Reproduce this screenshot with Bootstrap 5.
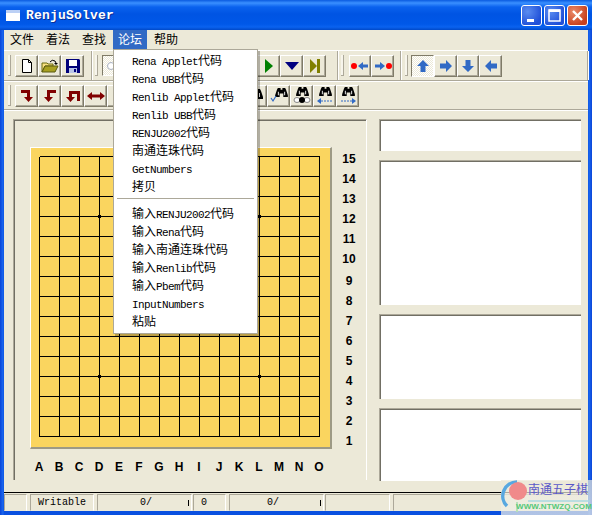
<!DOCTYPE html>
<html lang="zh">
<head>
<meta charset="utf-8">
<title>RenjuSolver</title>
<link rel="stylesheet" href="https://cdn.jsdelivr.net/npm/bootstrap@5.3.0/dist/css/bootstrap.min.css">
<style>
html,body{margin:0;padding:0;width:592px;height:515px;overflow:hidden;background:#0a4de0}
body{font-family:"Noto Sans CJK SC","Liberation Sans",sans-serif;font-size:12px;color:#000;line-height:1}
.xp-win{position:relative;width:592px;height:515px;background:linear-gradient(90deg,#0a45d8 0,#1a68f0 3px,#0a50e0 4px,#0a50e0 588px,#1a68f0 589px,#0a45d8 592px)}
.xp-title{height:30px;background:linear-gradient(180deg,#0a5be0 0,#3a90ff 3px,#0a62ee 7px,#0054e3 14px,#0058e8 24px,#0a62f0 27px,#0049c8 30px);color:#fff;padding-left:6px}
.xp-title-txt{font:bold 13px "Liberation Mono",monospace;letter-spacing:.2px;margin-left:6px;text-shadow:1px 1px #0a2f96}
.xp-appicon{width:14px;height:11px;background:#fff;border-top:3px solid #bcd0f5}
.xp-cap{width:21px;height:21px;border:1px solid #fff;border-radius:3px;background:radial-gradient(circle at 30% 30%,#5a8cf0,#2050d8 75%);margin-left:2px}
.xp-cap-close{background:radial-gradient(circle at 30% 30%,#ea8a6a,#c8401c 75%)}
.xp-client{margin:0 4px;height:481px;background:#ece9d8}
.xp-menubar{height:20px;padding-left:1px}
.xp-mi{width:34px;height:19px;margin-right:2px;color:#000;text-align:center;line-height:18px;font-size:12px}
.xp-mi-on{background:#316ac5;color:#fff}
.xp-row1{height:31px;border-top:1px solid #fff;border-bottom:1px solid #aca899}
.xp-row2{height:29px;border-top:1px solid #fff;border-bottom:1px solid #aca899;box-shadow:0 1px #fff;padding-left:4px}
.xp-band{height:29px;border-right:1px solid #aca899;box-shadow:1px 0 #fff}
.xp-grip{width:3px;height:21px;background:#f7f5ec;border-right:1px solid #aca899;border-bottom:1px solid #aca899;flex:none}
.xp-b1{width:88px;padding-left:4px}.xp-b1 .xp-grip{margin-right:4px}
.xp-b2{width:245px;margin-left:1px;padding-left:2px}.xp-b2 .xp-grip{margin-right:4px}
.xp-b3{width:62px;margin-left:1px;padding-left:2px}.xp-b3 .xp-grip{margin-right:5px}
.xp-b4{width:186px;margin-left:1px;padding-left:3px;border-right:1px solid #aca899}.xp-b4 .xp-grip{margin-right:3px}
.xp-row2 .xp-grip{margin-right:4px}
.btn.xp-tb{width:23px;height:22px;padding:0;border-radius:0;border:1px solid;border-color:#fff #7f7b68 #7f7b68 #fff;box-shadow:inset -1px -1px #aca899;background:#ece9d8;display:flex;align-items:center;justify-content:center;flex:none}
.btn.xp-tb-on{border-color:#7f7b68 #fff #fff #7f7b68;box-shadow:none;background-color:#f4f2e8;background-image:repeating-conic-gradient(#fff 0 25%,#ece9d8 0 50%);background-size:2px 2px}
.btn.xp-tb-n{width:22px}
.xp-combo{width:155px;height:21px;border:1px solid;border-color:#7f7b68 #fff #fff #7f7b68;background:repeating-conic-gradient(#fff 0 25%,#ece9d8 0 50%) 0 0/2px 2px;flex:none}
.xp-combo svg{display:block}
.xp-main{height:382px;padding:9px 7px 0 9px;gap:12px}
.xp-left{width:354px;height:361px;border:1px solid;border-color:#aca899 #fff transparent #aca899;border-bottom:0;box-shadow:inset 1px 1px #716f64;padding:27px 0 0 16px}
.xp-board{width:302px;height:302px;border:1px solid;border-color:#fff #9d9a85 #9d9a85 #fff;border-width:1px 2px 2px 1px;background:#fad55f;flex:none}
.xp-board svg{display:block}
.xp-nums{width:35px;padding-top:2px}
.xp-num,.xp-let{font:bold 12px "Liberation Sans",sans-serif;text-align:center;line-height:20px;height:20px}
.xp-num-gap{margin-top:2px}
.xp-lets{margin:6px 0 0 -1px}
.xp-let{width:20px}
.xp-right{width:202px;gap:9px}
.xp-box{background:#fff;border:1px solid;border-width:1px 0 0 1px;border-color:#aca899 transparent transparent #aca899;box-shadow:inset 1px 1px #716f64}
.xp-h1{height:32px}.xp-h2{height:145px}.xp-h3{height:85px}.xp-h4{height:73px}
.xp-status{height:19px;border-top:1px solid #000;padding:1px 0 0 0;gap:3px}
.xp-cell{height:17px;border:1px solid;border-color:#aca899 #fff #ece9d8 #aca899;font:10px/16px "Liberation Mono",monospace;text-align:center;flex:none}
.xp-cell-l{position:relative}
.xp-c0{width:23px}.xp-c1{width:64px}.xp-c2{width:95px;padding-left:3px}.xp-c3{width:33px;text-align:left;padding-left:7px;margin-left:-2px}.xp-c4{width:95px;padding-right:7px}.xp-c5{width:65px;margin-left:-2px}.xp-c6{width:195px}
.xp-tick{width:1px;height:6px;background:#000;position:absolute;right:2px;top:5px}
.dropdown-menu.xp-menu{position:absolute;left:113px;top:49px;width:145px;height:285px;margin:0;padding:1px 3px;border:1px solid #aca899;border-radius:0;background:#fff;box-shadow:2px 2px 0 rgba(0,0,0,.25);display:block;min-width:0}
.dropdown-item.xp-it{height:18px;line-height:18px;padding:0 0 0 15px;font-size:12px;color:#000;white-space:nowrap}
.xp-lat{font:11px "Liberation Mono",monospace;letter-spacing:-.6px}
.dropdown-divider.xp-sep{margin:3px 0 5px;border-top:1px solid #aca899;opacity:1}
.xp-wm{position:absolute;left:501px;top:480px;width:91px;height:35px;background:linear-gradient(180deg,rgba(236,233,216,.7),rgba(240,240,232,.72))}
.xp-wm svg{position:absolute;left:0;top:0}
.xp-wm-cn{position:absolute;left:27px;top:3px;font-size:12px;color:#5a58c8;white-space:nowrap}
.xp-wm-en{position:absolute;left:15px;top:22px;font:bold 8px "Liberation Sans",sans-serif;letter-spacing:.1px;color:#55c878;white-space:nowrap}
</style>
</head>
<body>
<svg width="0" height="0" class="position-absolute">
 <defs>
  <symbol id="i-bino" viewBox="0 0 14 11"><path d="M3 0h3v2h2V0h3l1 2 2 6v2H9V6H5v4H0V8l2-6z" fill="#000"/><path d="M3 4h1v4H3zM10 4h1v4h-1z" fill="#fff"/></symbol>
 </defs>
</svg>
<div class="xp-win">
 <div class="xp-title d-flex align-items-center">
  <div class="xp-appicon"></div>
  <div class="xp-title-txt flex-grow-1">RenjuSolver</div>
  <div class="xp-cap d-flex align-items-end justify-content-start"><svg width="19" height="19" viewBox="0 0 19 19"><rect x="5" y="13" width="7" height="3" fill="#fff"/></svg></div>
  <div class="xp-cap"><svg width="19" height="19" viewBox="0 0 19 19" class="d-block"><rect x="4" y="4" width="11" height="11" fill="none" stroke="#fff" stroke-width="1.5"/><rect x="4" y="3.5" width="11" height="2.5" fill="#fff"/></svg></div>
  <div class="xp-cap xp-cap-close me-1"><svg width="19" height="19" viewBox="0 0 19 19" class="d-block"><path d="M5 5l9 9M14 5l-9 9" stroke="#fff" stroke-width="2.4"/></svg></div>
 </div>
 <div class="xp-client d-flex flex-column">
  <nav class="xp-menubar d-flex">
   <div class="xp-mi">文件</div><div class="xp-mi">着法</div><div class="xp-mi">查找</div><div class="xp-mi xp-mi-on">论坛</div><div class="xp-mi">帮助</div>
  </nav>
  <div class="xp-row1 d-flex">
   <div class="xp-band xp-b1 d-flex align-items-center">
    <div class="xp-grip"></div>
    <button class="btn xp-tb"><svg width="16" height="16" viewBox="0 0 16 16"><path d="M3.5 1.5h6l3 3v10h-9z" fill="#fff" stroke="#000"/><path d="M9.5 1.5v3h3" fill="none" stroke="#000"/></svg></button>
    <button class="btn xp-tb"><svg width="18" height="16" viewBox="0 0 18 16"><path d="M1 5h5l1 1h5v2H4l-3 6z" fill="#f8e080" stroke="#6a6a10"/><path d="M4 8h13l-3 6H1z" fill="#a8a020" stroke="#5a5a10"/><path d="M9 4q2-3 5-1l1 2" fill="none" stroke="#000"/><path d="M13 5h4l-2 2z" fill="#000"/></svg></button>
    <button class="btn xp-tb"><svg width="16" height="16" viewBox="0 0 16 16"><path d="M1 1h13l1 1v13H1z" fill="#00007a"/><rect x="4" y="2" width="8" height="6" fill="#fff"/><rect x="4" y="10" width="8" height="5" fill="#b8c4e8"/><rect x="9" y="11" width="2" height="3" fill="#00007a"/></svg></button>
   </div>
   <div class="xp-band xp-b2 d-flex align-items-center">
    <div class="xp-grip"></div>
    <div class="xp-combo"><svg width="20" height="19" viewBox="0 0 20 19"><circle cx="8" cy="10" r="3.500" fill="#fff" stroke="#a8b0c0"/></svg></div>
    <button class="btn xp-tb"><svg width="16" height="16" viewBox="0 0 16 16"><path d="M4 1l8 7-8 7z" fill="#008000"/></svg></button>
    <button class="btn xp-tb"><svg width="16" height="16" viewBox="0 0 16 16"><path d="M1 4h14l-7 8z" fill="#000080"/></svg></button>
    <button class="btn xp-tb"><svg width="16" height="16" viewBox="0 0 16 16"><path d="M3 1l7 7-7 7z" fill="#808000"/><rect x="10" y="1" width="3" height="14" fill="#808000"/></svg></button>
   </div>
   <div class="xp-band xp-b3 d-flex align-items-center">
    <div class="xp-grip"></div>
    <button class="btn xp-tb xp-tb-n"><svg width="20" height="12" viewBox="0 0 20 12"><circle cx="4" cy="6" r="3" fill="#f00"/><path d="M8 6l5-4v2.500h5v3h-5V10z" fill="#316ac5"/></svg></button>
    <button class="btn xp-tb"><svg width="20" height="12" viewBox="0 0 20 12"><path d="M2 4.500h5V2l5 4-5 4V7.500H2z" fill="#316ac5"/><circle cx="16" cy="6" r="3" fill="#f00"/></svg></button>
   </div>
   <div class="xp-band xp-b4 d-flex align-items-center">
    <div class="xp-grip"></div>
    <button class="btn xp-tb xp-tb-on"><svg width="14" height="14" viewBox="0 0 14 14"><path d="M7 1l6 6H9.500v6h-5V7H1z" fill="#316ac5"/></svg></button>
    <button class="btn xp-tb"><svg width="14" height="14" viewBox="0 0 14 14"><path d="M1 4.500h6V1l6 6-6 6V9.500H1z" fill="#316ac5"/></svg></button>
    <button class="btn xp-tb xp-tb-n"><svg width="14" height="14" viewBox="0 0 14 14"><path d="M7 13l6-6H9.500V1h-5v6H1z" fill="#316ac5"/></svg></button>
    <button class="btn xp-tb"><svg width="14" height="14" viewBox="0 0 14 14"><path d="M13 4.500H7V1L1 7l6 6V9.500h6z" fill="#316ac5"/></svg></button>
   </div>
  </div>
  <div class="xp-row2 d-flex align-items-center">
   <div class="xp-grip"></div>
   <button class="btn xp-tb"><svg width="14" height="14" viewBox="0 0 14 14"><path d="M1 1h9v7h3l-4.500 5L4 8h3V4H1z" fill="#800000"/></svg></button>
   <button class="btn xp-tb"><svg width="14" height="14" viewBox="0 0 14 14"><path d="M13 1H4v7H1l4.500 5L10 8H7V4h6z" fill="#800000"/></svg></button>
   <button class="btn xp-tb"><svg width="16" height="14" viewBox="0 0 16 14"><path d="M4 2h11v10h-3V5H7v3h3l-4.500 5L1 8h3z" fill="#800000"/></svg></button>
   <button class="btn xp-tb"><svg width="18" height="10" viewBox="0 0 18 10"><path d="M0 5l5-4v2.500h8V1l5 4-5 4V6.500H5V9z" fill="#800000"/></svg></button>
   <button class="btn xp-tb"></button><button class="btn xp-tb"></button><button class="btn xp-tb"></button><button class="btn xp-tb"></button><button class="btn xp-tb"></button>
   <button class="btn xp-tb"></button>
   <button class="btn xp-tb xp-tb-n"><svg width="16" height="16" viewBox="0 0 16 16"><use href="#i-bino" x="1" y="1" width="14" height="11"/></svg></button>
   <button class="btn xp-tb"><svg width="18" height="18" viewBox="0 0 18 18"><use href="#i-bino" x="5" y="1" width="13" height="10"/><path d="M1 11l2 3 3-5" fill="none" stroke="#316ac5" stroke-width="1.2"/></svg></button>
   <button class="btn xp-tb"><svg width="20" height="18" viewBox="0 0 20 18"><use href="#i-bino" x="4" y="0" width="13" height="10"/><ellipse cx="5" cy="13" rx="3" ry="2.500" fill="#fff" stroke="#888"/><ellipse cx="15" cy="13" rx="3" ry="2.500" fill="#fff" stroke="#888"/><circle cx="10" cy="13" r="3" fill="#000"/></svg></button>
   <button class="btn xp-tb"><svg width="18" height="18" viewBox="0 0 18 18"><use href="#i-bino" x="3" y="0" width="13" height="10"/><path d="M1 14l4-3v6z" fill="#316ac5"/><path d="M5 14h11" stroke="#316ac5" stroke-dasharray="2 1" stroke-width="1.2"/></svg></button>
   <button class="btn xp-tb"><svg width="18" height="18" viewBox="0 0 18 18"><use href="#i-bino" x="3" y="0" width="13" height="10"/><path d="M17 14l-4-3v6z" fill="#316ac5"/><path d="M2 14h11" stroke="#316ac5" stroke-dasharray="2 1" stroke-width="1.2"/></svg></button>
  </div>
  <div class="xp-main d-flex">
   <div class="xp-left d-flex flex-column">
    <div class="d-flex">
     <div class="xp-board">
      <svg width="299" height="299" viewBox="0 0 299 299" shape-rendering="crispEdges">
       <g stroke="#000" stroke-width="1">
        <path fill="none" d="M8.500 8.500h280M8.500 28.500h280M8.500 48.500h280M8.500 68.500h280M8.500 88.500h280M8.500 108.500h280M8.500 128.500h280M8.500 148.500h280M8.500 168.500h280M8.500 188.500h280M8.500 208.500h280M8.500 228.500h280M8.500 248.500h280M8.500 268.500h280M8.500 288.500h280"/>
        <path fill="none" d="M8.500 8.500v280M28.500 8.500v280M48.500 8.500v280M68.500 8.500v280M88.500 8.500v280M108.500 8.500v280M128.500 8.500v280M148.500 8.500v280M168.500 8.500v280M188.500 8.500v280M208.500 8.500v280M228.500 8.500v280M248.500 8.500v280M268.500 8.500v280M288.500 8.500v280"/>
       </g>
       <g fill="#000"><rect x="67" y="67" width="3" height="3"/><rect x="227" y="67" width="3" height="3"/><rect x="147" y="147" width="3" height="3"/><rect x="67" y="227" width="3" height="3"/><rect x="227" y="227" width="3" height="3"/></g>
      </svg>
     </div>
     <div class="xp-nums">
      <div class="xp-num">15</div><div class="xp-num">14</div><div class="xp-num">13</div><div class="xp-num">12</div><div class="xp-num">11</div><div class="xp-num">10</div>
      <div class="xp-num xp-num-gap">9</div><div class="xp-num">8</div><div class="xp-num">7</div><div class="xp-num">6</div><div class="xp-num">5</div><div class="xp-num">4</div><div class="xp-num">3</div><div class="xp-num">2</div><div class="xp-num">1</div>
     </div>
    </div>
    <div class="xp-lets d-flex">
     <div class="xp-let">A</div><div class="xp-let">B</div><div class="xp-let">C</div><div class="xp-let">D</div><div class="xp-let">E</div><div class="xp-let">F</div><div class="xp-let">G</div><div class="xp-let">H</div><div class="xp-let">I</div><div class="xp-let">J</div><div class="xp-let">K</div><div class="xp-let">L</div><div class="xp-let">M</div><div class="xp-let">N</div><div class="xp-let">O</div>
    </div>
   </div>
   <div class="xp-right d-flex flex-column">
    <div class="xp-box xp-h1"></div>
    <div class="xp-box xp-h2"></div>
    <div class="xp-box xp-h3"></div>
    <div class="xp-box xp-h4"></div>
   </div>
  </div>
  <div class="xp-status d-flex">
   <div class="xp-cell xp-c0"></div>
   <div class="xp-cell xp-c1">Writable</div>
   <div class="xp-cell xp-c2 xp-cell-l">0/<span class="xp-tick"></span></div>
   <div class="xp-cell xp-c3">0</div>
   <div class="xp-cell xp-c4 xp-cell-l">0/<span class="xp-tick"></span></div>
   <div class="xp-cell xp-c5"></div>
   <div class="xp-cell xp-c6"></div>
  </div>
 </div>
 <div class="dropdown-menu xp-menu">
  <a class="dropdown-item xp-it"><span class="xp-lat">Rena Applet</span>代码</a>
  <a class="dropdown-item xp-it"><span class="xp-lat">Rena UBB</span>代码</a>
  <a class="dropdown-item xp-it"><span class="xp-lat">Renlib Applet</span>代码</a>
  <a class="dropdown-item xp-it"><span class="xp-lat">Renlib UBB</span>代码</a>
  <a class="dropdown-item xp-it"><span class="xp-lat">RENJU2002</span>代码</a>
  <a class="dropdown-item xp-it">南通连珠代码</a>
  <a class="dropdown-item xp-it"><span class="xp-lat">GetNumbers</span></a>
  <a class="dropdown-item xp-it">拷贝</a>
  <hr class="dropdown-divider xp-sep">
  <a class="dropdown-item xp-it">输入<span class="xp-lat">RENJU2002</span>代码</a>
  <a class="dropdown-item xp-it">输入<span class="xp-lat">Rena</span>代码</a>
  <a class="dropdown-item xp-it">输入南通连珠代码</a>
  <a class="dropdown-item xp-it">输入<span class="xp-lat">Renlib</span>代码</a>
  <a class="dropdown-item xp-it">输入<span class="xp-lat">Pbem</span>代码</a>
  <a class="dropdown-item xp-it"><span class="xp-lat">InputNumbers</span></a>
  <a class="dropdown-item xp-it">粘贴</a>
 </div>
 <div class="xp-wm">
  <svg width="91" height="35" viewBox="0 0 91 35">
   <path d="M16 2A14 14 0 0 0 6 26" fill="none" stroke="#58a8e0" stroke-width="3.500"/>
   <circle cx="17" cy="11" r="9" fill="#f08a8a"/>
   <path d="M16 22v10" stroke="#b8e0b8" stroke-width="2"/>
   <path d="M27 21h62" stroke="#a8d8e0" stroke-width="1.500"/>
  </svg>
  <div class="xp-wm-cn">南通五子棋</div>
  <div class="xp-wm-en">WWW.NTWZQ.COM</div>
 </div>
</div>
</body>
</html>
